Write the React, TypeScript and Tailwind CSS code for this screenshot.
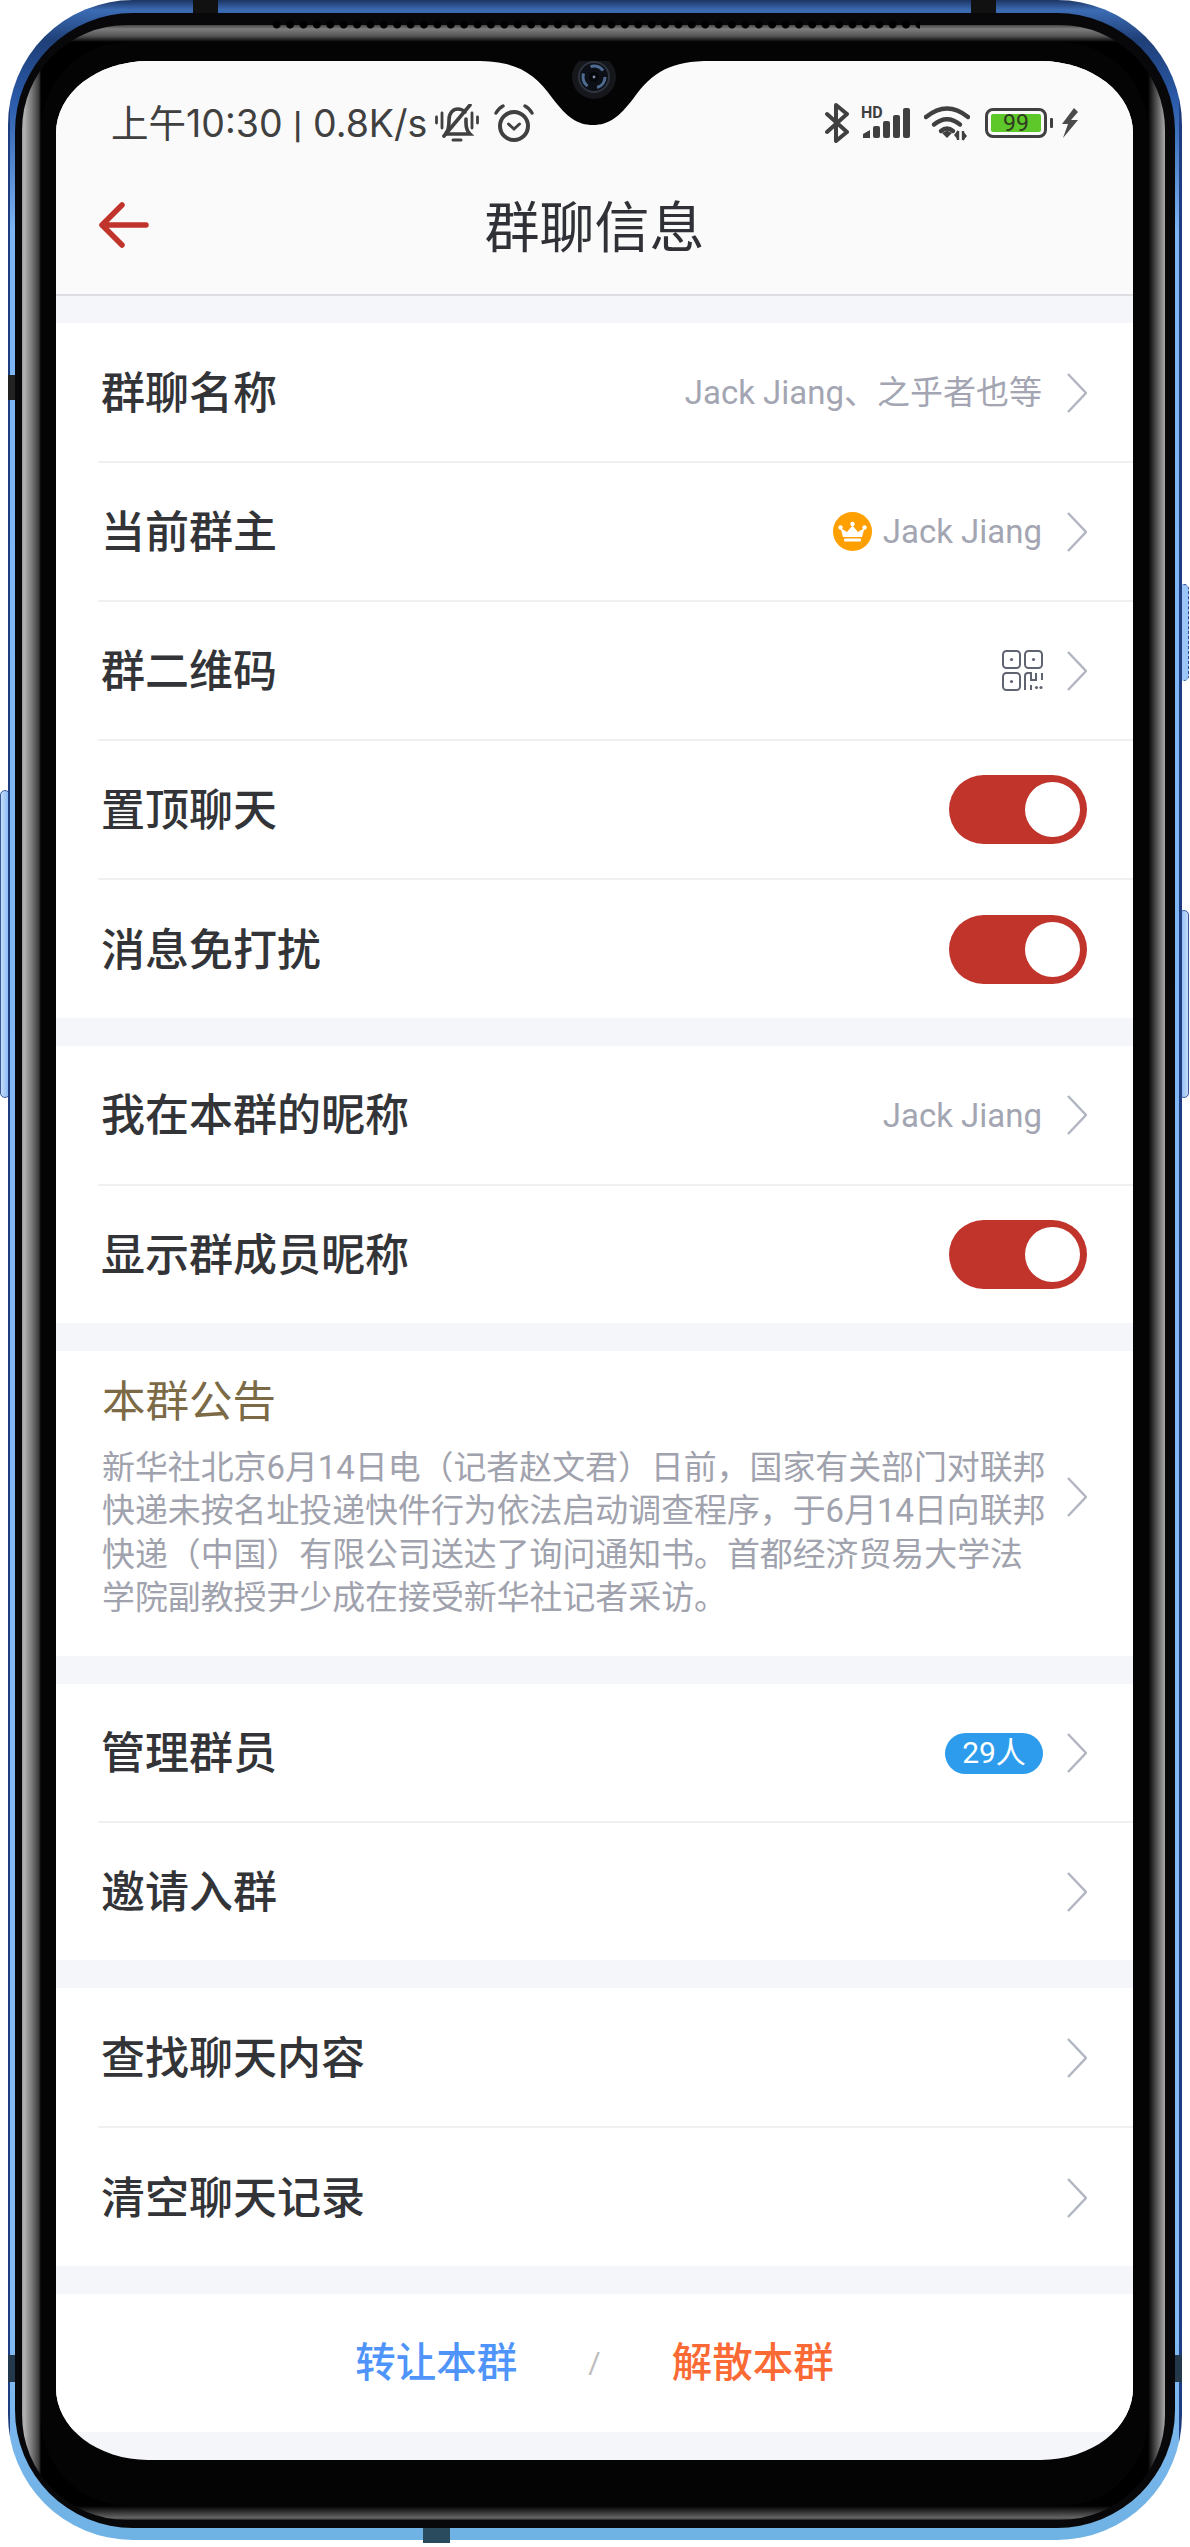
import React from "react";

function Chevron() {
  return (
    <svg width="20" height="40" viewBox="0 0 20 40" fill="none" className="shrink-0">
      <path d="M1 1L19 20L1 39" stroke="#b2b6c2" strokeWidth="2.5" />
    </svg>
  );
}

function Toggle() {
  return (
    <div className="flex h-[69px] w-[138px] items-center justify-end rounded-full bg-[#c0342c] pr-[7px]">
      <div className="h-[55px] w-[55px] rounded-full bg-white" />
    </div>
  );
}

function Crown() {
  return (
    <svg width="39" height="39" viewBox="0 0 39 39">
      <circle cx="19.5" cy="19.5" r="19.5" fill="#ff9f00" />
      <path d="M10 25L7.5 16L14 20L19.5 13.5L25 20L31.5 16L29 25Z" fill="#fff" />
      <rect x="11" y="26.5" width="17" height="3" rx="1" fill="#fff" />
      <circle cx="7.5" cy="15.5" r="2.2" fill="#fff" />
      <circle cx="19.5" cy="12" r="2.2" fill="#fff" />
      <circle cx="31.5" cy="15.5" r="2.2" fill="#fff" />
    </svg>
  );
}

function QrIcon() {
  return (
    <svg width="41" height="41" viewBox="0 0 41 41" fill="none" stroke="#5f6470" strokeWidth="2">
      <rect x="1" y="1" width="17" height="17" rx="3.5" />
      <rect x="23" y="1" width="17" height="17" rx="3.5" />
      <rect x="1" y="23" width="17" height="17" rx="3.5" />
      <circle cx="9.5" cy="9.5" r="1.6" fill="#5f6470" stroke="none" />
      <circle cx="31.5" cy="9.5" r="1.6" fill="#5f6470" stroke="none" />
      <circle cx="9.5" cy="31.5" r="1.6" fill="#5f6470" stroke="none" />
      <path d="M23 40V26Q23 23 26 23H29V30H34V23M40 23V30M29 35V40" />
      <circle cx="34.5" cy="37.5" r="1.6" fill="#5f6470" stroke="none" />
      <circle cx="39" cy="37.5" r="1.6" fill="#5f6470" stroke="none" />
    </svg>
  );
}

function BellOff() {
  return (
    <svg width="44" height="38" viewBox="0 0 44 38" fill="none" stroke="#404040" strokeWidth="3.6" strokeLinecap="round">
      <path d="M1.5 13V19M7 9V24M37 9V24M42.5 13V19" strokeWidth="2.8" />
      <path d="M11 29C14 26 14 22 14 16C14 9 18 5 23 5C26 5 28 6 30 8" />
      <path d="M31 15V19C31 24 32 27 35 30H11" />
      <path d="M9 32L35 1" />
      <path d="M18 36H26" strokeWidth="3" />
    </svg>
  );
}

function AlarmIcon() {
  return (
    <svg width="40" height="38" viewBox="0 0 40 38" fill="none" stroke="#404040" strokeLinecap="round">
      <circle cx="20" cy="22" r="14" strokeWidth="4" />
      <path d="M2 9Q5 4 9 2M38 9Q35 4 31 2" strokeWidth="3.4" />
      <path d="M14.5 20L20 25L25.5 20" strokeWidth="3" />
    </svg>
  );
}

function Bluetooth() {
  return (
    <svg width="24" height="40" viewBox="0 0 24 40" fill="none" stroke="#404040" strokeWidth="4" strokeLinejoin="round" strokeLinecap="round">
      <path d="M2 11L22 29L11 38V2L22 11L2 29" />
    </svg>
  );
}

function Signal() {
  return (
    <svg width="47" height="30" viewBox="0 0 47 30" fill="#404040">
      <path d="M0 30V26L7 22V30Z" />
      <rect x="10" y="18" width="7" height="12" rx="2" />
      <rect x="20" y="13" width="7" height="17" rx="2" />
      <rect x="30" y="7" width="7" height="23" rx="2" />
      <rect x="40" y="0" width="7" height="30" rx="2" />
    </svg>
  );
}

function Wifi() {
  return (
    <svg width="46" height="35" viewBox="0 0 46 35" fill="none" stroke="#404040" strokeWidth="4.4" strokeLinecap="round">
      <path d="M2 11Q23 -6 44 11" />
      <path d="M10 18.5Q23 8 36 18.5" />
      <path d="M17 25Q23 20 29 25" />
      <path d="M18 27L23 24.5L28 27L23 32Z" fill="#404040" stroke="none" />
      <path d="M34 34V25M39 34V25" strokeWidth="2.4" strokeLinecap="butt" />
      <path d="M30 29L34 24V34ZM43 30L39 35V25Z" fill="#404040" stroke="none" />
    </svg>
  );
}

function Battery() {
  return (
    <div className="flex items-center gap-[3px]">
      <div className="flex h-[30px] w-[62px] items-center justify-center rounded-[8px] border-[3px] border-[#404040] bg-transparent p-[3px]">
        <div className="flex h-full w-full items-center justify-center rounded-[2px] bg-[#5ec72a] text-[23px] leading-none text-[#2f3a20]">
          99
        </div>
      </div>
      <div className="h-[10px] w-[3px] rounded-[1px] bg-[#404040]" />
    </div>
  );
}

function Bolt() {
  return (
    <svg width="18" height="30" viewBox="0 0 18 30" fill="#4a4a4a">
      <path d="M13 0L1 16L7 16L2 30L17 12L10 12L17 4Z" />
    </svg>
  );
}

function BackArrow() {
  return (
    <svg width="50" height="46" viewBox="0 0 50 46" fill="none" stroke="#c1342c" strokeWidth="5.5" strokeLinecap="round" strokeLinejoin="round">
      <path d="M47 23H3M23 3L3 23L23 43" />
    </svg>
  );
}

function Row({ title, last, children }: { title: string; last?: boolean; children?: React.ReactNode }) {
  return (
    <div className="flex-1 pl-[42px]">
      <div className={`flex h-[calc(100%+1px)] items-center justify-between pl-[3px] pr-[46px] pt-[1px] ${last ? "" : "border-b-2 border-[#f0f0f3]"}`}>
        <span className="pt-[2px] text-[44px] leading-none font-medium text-[#333438]">{title}</span>
        <div className="flex items-center">{children}</div>
      </div>
    </div>
  );
}

function Value({ text }: { text: string }) {
  return <span className="mr-[25px] text-[33px] leading-none text-[#a3a6b2]">{text}</span>;
}

function Section({ h, children }: { h: string; children: React.ReactNode }) {
  return <div className={`flex flex-col bg-white ${h}`}>{children}</div>;
}

export default function App() {
  return (
    <div className="relative h-[2547px] w-[1190px] overflow-hidden bg-white font-['Roboto','Noto_Sans_CJK_SC',sans-serif]">
      {/* side buttons */}
      <div className="absolute left-0 top-[790px] h-[308px] w-[10px] rounded-[5px] border border-[#3a5a9a] bg-[linear-gradient(90deg,#c5dcf7,#86b8f8)]" />
      <div className="absolute left-[1179px] top-[584px] h-[97px] w-[10px] rounded-[5px] border border-dashed border-[#2c4a8e] bg-[#9cc6f8]" />
      <div className="absolute left-[1179px] top-[910px] h-[188px] w-[10px] rounded-[5px] border border-[#3a5a9a] bg-[linear-gradient(90deg,#86b8f8,#c5dcf7)]" />

      {/* phone frame */}
      <div className="relative ml-[8px] flex h-[2540px] w-[1174px] rounded-[125px] bg-[linear-gradient(90deg,#1e3c80_0px,#1e3c80_2px,transparent_2px,transparent_calc(100%-3px),#1e3c80_calc(100%-3px)),linear-gradient(180deg,#1c3563_0px,#3c6cb4_10px,#1f3f78_40px,#2a5aa8_100px,#7db4f4_230px,#84baf4_2300px,#6fb2e4_100%)] px-[7px] pb-[12px] pt-[13px]">
        <div className="absolute left-[185px] top-0 h-[13px] w-[25px] bg-[#111]" />
        <div className="absolute left-[963px] top-0 h-[13px] w-[25px] bg-[#111]" />
        <div className="absolute left-[415px] top-[2528px] h-[15px] w-[27px] bg-[#2a4a5e]" />
        <div className="absolute left-0 top-[375px] h-[25px] w-[7px] bg-[#222]" />
        <div className="absolute left-0 top-[2355px] h-[27px] w-[7px] bg-[#23384a]" />
        <div className="absolute right-0 top-[2355px] h-[27px] w-[7px] bg-[#23384a]" />

        <div className="flex flex-1 rounded-[118px] bg-[#08080a] pb-[8px] pl-[7px] pr-[10px] pt-[12px]">
          <div className="relative flex flex-1 rounded-[105px] bg-[linear-gradient(90deg,#9a9a9a_0px,#b5b5b5_2px,#777_10px,#3a3a3a_17px,#000_19px,transparent_19px,transparent_calc(100%-17px),#000_calc(100%-17px),#777_calc(100%-5px),#aaa_100%),linear-gradient(180deg,#444_0px,#7d7d7d_4px,#555_11px,#000_17px,#000_calc(100%-14px),#666_calc(100%-2px),#222_100%)] pb-[14px] pl-[19px] pr-[17px] pt-[17px]">
            {/* speaker grille */}
            <div className="absolute left-[248px] top-[-5px] h-[9px] w-[650px] bg-[radial-gradient(circle,#000_3.6px,transparent_4.4px)] bg-[length:13.4px_9px]" />

            <div className="flex flex-1 rounded-[88px] bg-[#040405] px-[15px] pb-[46px] pt-[19px]">
              {/* screen */}
              <div className="relative flex flex-1 flex-col overflow-hidden rounded-[92px/72px] bg-[#f5f6fa]">
                {/* notch */}
                <svg width="236" height="65" viewBox="0 0 236 65" className="absolute left-[419px] top-0" fill="#040405">
                  <path d="M0 0C40 0 58 10 78 38C92 56 102 64 118 64C134 64 144 56 158 38C178 10 196 0 236 0Z" />
                </svg>
                <svg width="46" height="46" viewBox="0 0 46 46" className="absolute left-[515px] top-[-7px]">
                  <circle cx="23" cy="23" r="22" fill="#15171b" />
                  <circle cx="23" cy="23" r="15" fill="#0c1016" stroke="#2e3440" strokeWidth="2" />
                  <circle cx="23" cy="23" r="11" fill="none" stroke="#4e6c92" strokeWidth="3" strokeDasharray="14 10" />
                  <circle cx="23" cy="23" r="5" fill="#05070a" />
                  <circle cx="23" cy="23" r="1.4" fill="#7f8fa8" />
                </svg>

                <div className="h-[235px] shrink-0 border-b-2 border-[#dedee2] bg-[#fafafa]">
                  {/* status bar */}
                  <div className="mt-[40px] flex h-[44px] items-center justify-between pl-[55px] pr-[54px] text-[#404040]">
                    <div className="flex items-center">
                      <span className="whitespace-nowrap pt-[2px] font-['Inter','Noto_Sans_CJK_SC',sans-serif] text-[37.5px] leading-none">
                        上午10:30 <span className="font-['Roboto'] font-medium">|</span> 0.8K/s
                      </span>
                      <div className="ml-[8px]">
                        <BellOff />
                      </div>
                      <div className="ml-[15px]">
                        <AlarmIcon />
                      </div>
                    </div>
                    <div className="flex items-center">
                      <Bluetooth />
                      <div className="relative ml-[14px]">
                        <Signal />
                        <span className="absolute left-[-2px] top-[-3px] text-[16px] leading-none font-bold">HD</span>
                      </div>
                      <div className="ml-[14px]">
                        <Wifi />
                      </div>
                      <div className="ml-[15px]">
                        <Battery />
                      </div>
                      <div className="ml-[8px]">
                        <Bolt />
                      </div>
                    </div>
                  </div>
                  {/* nav */}
                  <div className="relative mt-[20px] flex h-[120px] items-center justify-center">
                    <div className="absolute left-[43px] top-[37px]">
                      <BackArrow />
                    </div>
                    <span className="pt-[6px] text-[55px] leading-none text-[#2f3136]">群聊信息</span>
                  </div>
                </div>

                <div className="h-[27px] shrink-0" />
                <Section h="h-[695px]">
                  <Row title="群聊名称">
                    <Value text="Jack Jiang、之乎者也等" />
                    <Chevron />
                  </Row>
                  <Row title="当前群主">
                    <div className="mr-[11px]">
                      <Crown />
                    </div>
                    <Value text="Jack Jiang" />
                    <Chevron />
                  </Row>
                  <Row title="群二维码">
                    <div className="mr-[24px]">
                      <QrIcon />
                    </div>
                    <Chevron />
                  </Row>
                  <Row title="置顶聊天">
                    <Toggle />
                  </Row>
                  <Row title="消息免打扰" last>
                    <Toggle />
                  </Row>
                </Section>

                <div className="h-[28px] shrink-0" />
                <Section h="h-[277px]">
                  <Row title="我在本群的昵称">
                    <Value text="Jack Jiang" />
                    <Chevron />
                  </Row>
                  <Row title="显示群成员昵称" last>
                    <Toggle />
                  </Row>
                </Section>

                <div className="h-[28px] shrink-0" />
                <div className="flex h-[305px] items-center justify-between bg-white pl-[46px] pr-[46px]">
                  <div className="self-start whitespace-nowrap pt-[26px]">
                    <div className="text-[43.5px] leading-[52px] text-[#7b6a45]">本群公告</div>
                    <div className="mt-[17px] text-[32.9px] leading-[43.4px] text-[#a0a2ad]">
                      新华社北京6月14日电（记者赵文君）日前，国家有关部门对联邦
                      <br />
                      快递未按名址投递快件行为依法启动调查程序，于6月14日向联邦
                      <br />
                      快递（中国）有限公司送达了询问通知书。首都经济贸易大学法
                      <br />
                      学院副教授尹少成在接受新华社记者采访。
                    </div>
                  </div>
                  <div className="mb-[13px]">
                    <Chevron />
                  </div>
                </div>

                <div className="h-[28px] shrink-0" />
                <Section h="h-[276px]">
                  <Row title="管理群员">
                    <div className="mr-[24px] flex h-[41px] w-[98px] items-center justify-center rounded-full bg-[#2d9cec] text-[30px] leading-none text-white">
                      29人
                    </div>
                    <Chevron />
                  </Row>
                  <Row title="邀请入群" last>
                    <Chevron />
                  </Row>
                </Section>

                <div className="h-[28px] shrink-0" />
                <Section h="h-[278px]">
                  <Row title="查找聊天内容">
                    <Chevron />
                  </Row>
                  <Row title="清空聊天记录" last>
                    <Chevron />
                  </Row>
                </Section>

                <div className="h-[28px] shrink-0" />
                <div className="flex h-[138px] items-center justify-center bg-white text-[40.5px] leading-none font-medium">
                  <span className="text-[#4f94fa]">转让本群</span>
                  <span className="mx-[71px] text-[30px] font-normal text-[#bdbdbd]">/</span>
                  <span className="text-[#fb6a35]">解散本群</span>
                </div>
              </div>
            </div>
          </div>
        </div>
      </div>
    </div>
  );
}
